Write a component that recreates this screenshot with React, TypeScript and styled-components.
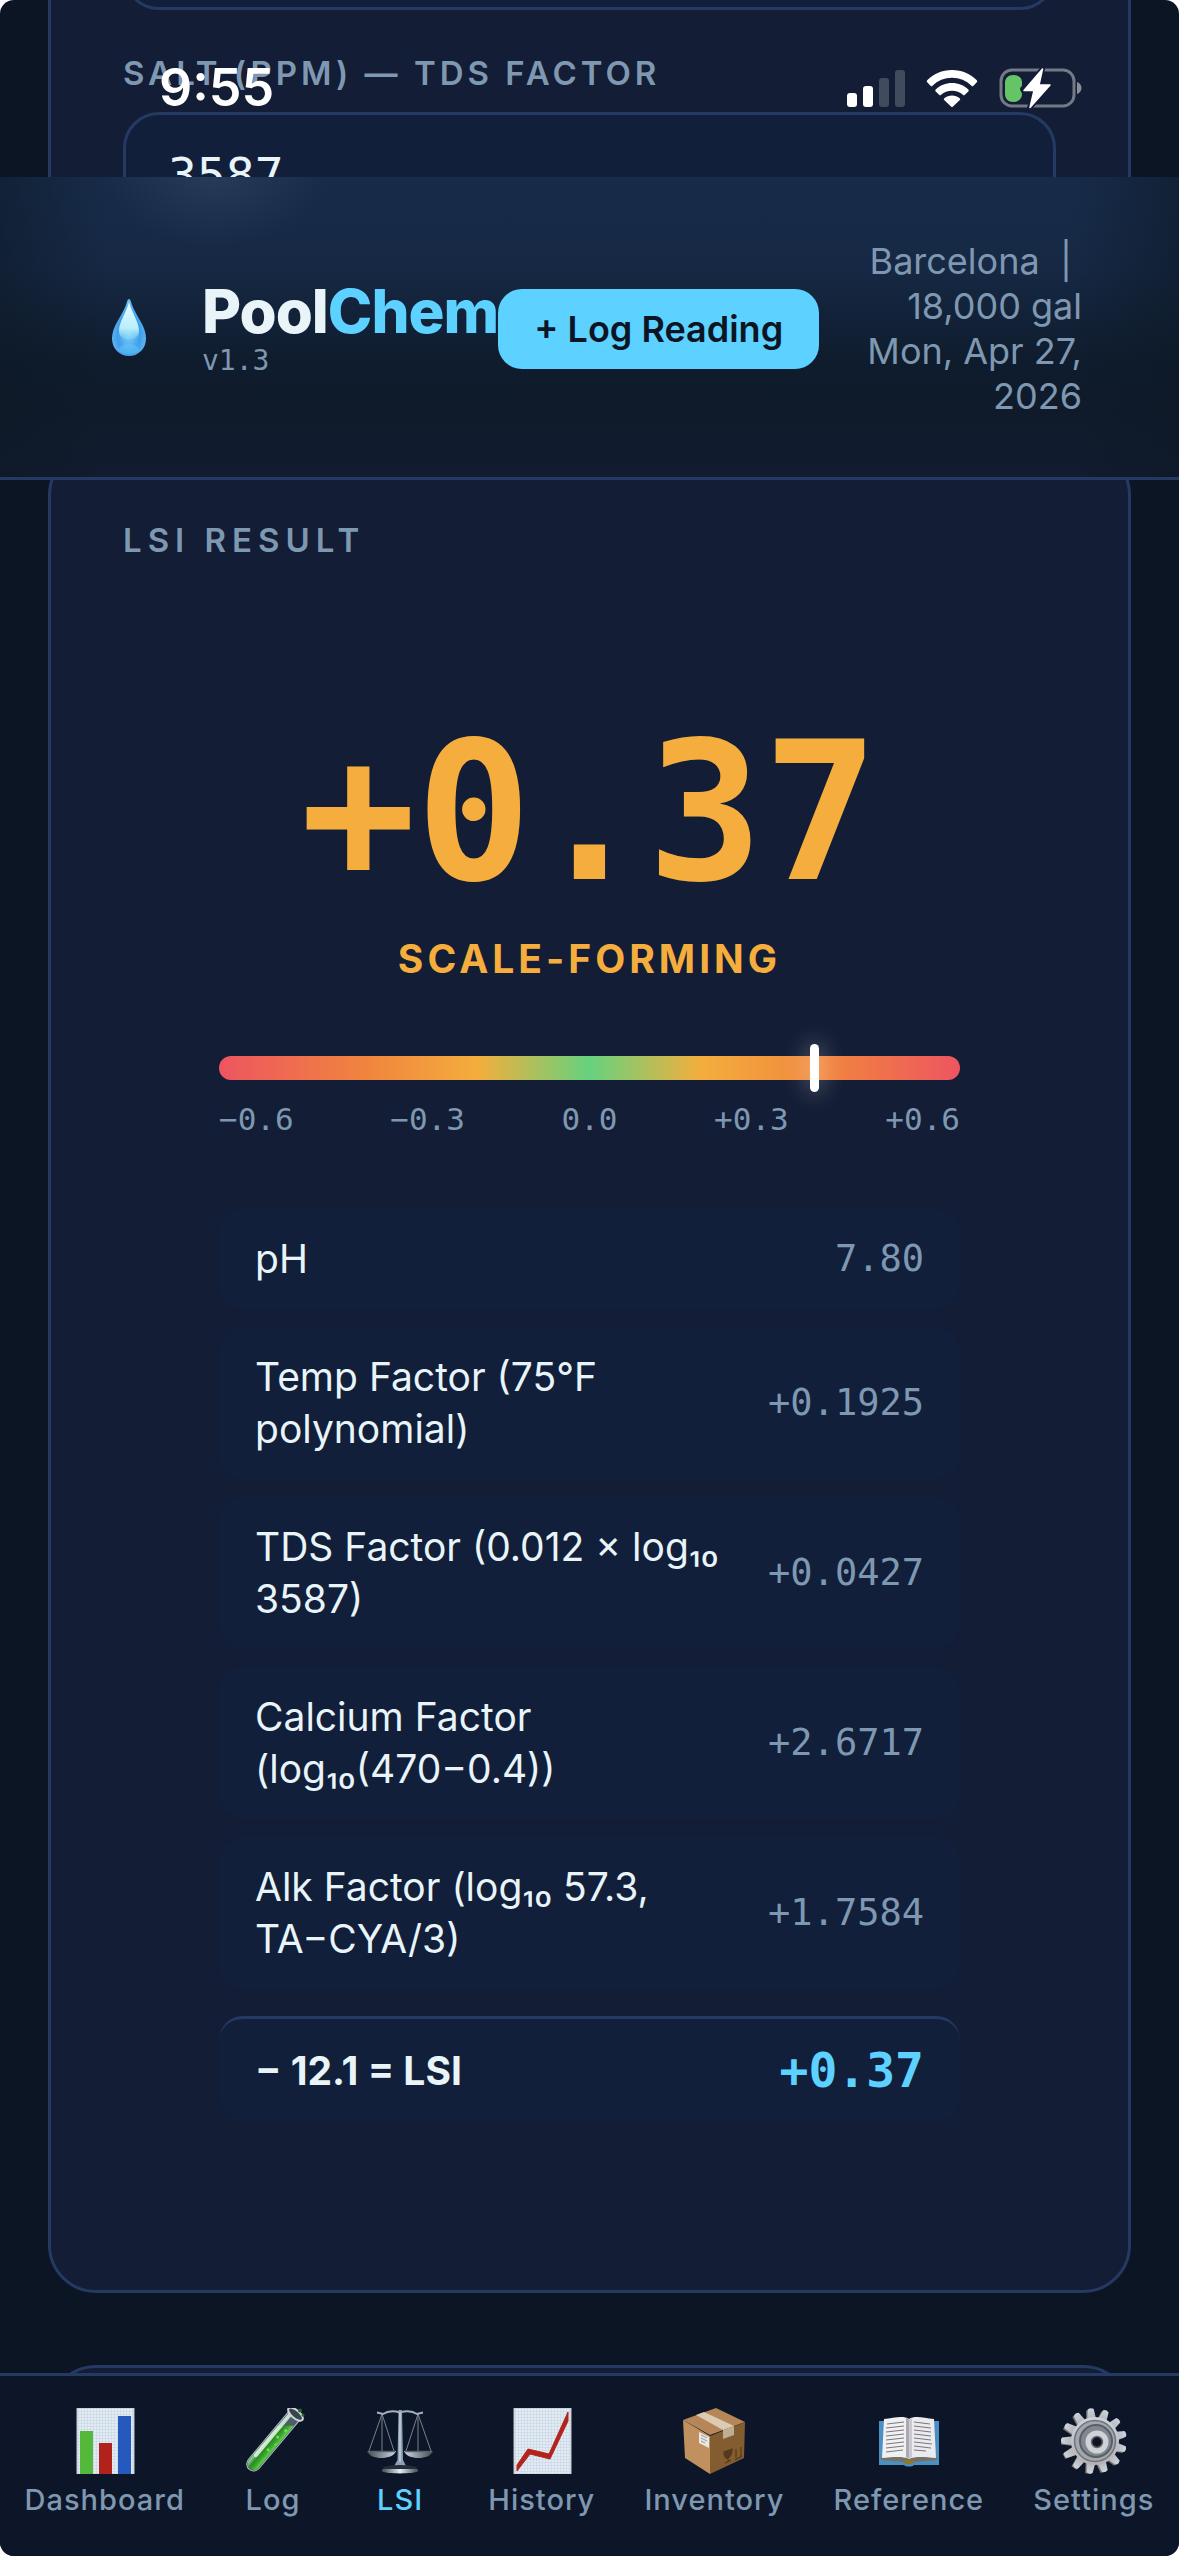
import React from "react";
import styled, { createGlobalStyle, css } from "styled-components";

const c = {
  page: "#0c1524",
  card: "#131d35",
  inset: "#111f3a",
  line: "#243a63",
  text: "#e8f4f8",
  muted: "#7f98b2",
  cyan: "#5dd1ff",
  amber: "#f5ae3e",
};
const sans = `Inter, "Liberation Sans", sans-serif`;
const mono = `"DejaVu Sans Mono", "Liberation Mono", monospace`;

const GlobalStyle = createGlobalStyle`
  *, *::before, *::after { box-sizing: border-box; }
  body { margin: 0; background: #fff; font-family: ${sans}; color: ${c.text}; }
`;

const Screen = styled.div`
  position: relative;
  height: 100vh;
  overflow: hidden;
  border-radius: 14px;
  background: ${c.page};
`;

/* ---------- status bar ---------- */
const StatusBar = styled.div`
  position: absolute;
  inset: 0 0 auto 0;
  z-index: 3;
  display: flex;
  align-items: center;
  justify-content: space-between;
  padding: 58px 96px 0 159px;
  color: #fff;
`;
const Clock = styled.time`
  font-size: 52px;
  line-height: 60px;
  font-weight: 600;
`;
const StatusIcons = styled.div`
  display: flex;
  align-items: center;
  gap: 21px;
  svg { display: block; }
`;

/* ---------- header ---------- */
const Header = styled.header`
  position: absolute;
  inset: 177px 0 auto 0;
  z-index: 2;
  display: flex;
  align-items: center;
  padding: 62px 97px 58px;
  border-bottom: 3px solid ${c.line};
  background:
    radial-gradient(ellipse 110px 70px at 215px 0, rgba(70, 92, 120, 0.32), transparent),
    linear-gradient(90deg, rgba(12, 24, 36, 0.5), transparent 9%, transparent 91%, rgba(12, 24, 36, 0.5)),
    linear-gradient(180deg, #172c4a 0%, #162844 30%, #0f1c2d 62%, #0f1b2b 78%, #121b30 100%);
`;
const Brand = styled.div`
  display: flex;
  flex: none;
  align-items: center;
  gap: 39px;
  svg { display: block; }
`;
const Title = styled.h1`
  margin: 0;
  font-size: 60px;
  line-height: 64px;
  font-weight: 800;
  letter-spacing: -1px;
`;
const Accent = styled.span`
  color: ${c.cyan};
`;
const Version = styled.div`
  font: 28px/36px ${mono};
  color: ${c.muted};
`;
const LogButton = styled.button`
  flex: none;
  height: 80px;
  padding: 0 36px;
  border: 0;
  border-radius: 24px;
  background: ${c.cyan};
  color: ${c.page};
  font: 600 36px/42px ${sans};
`;
const Meta = styled.div`
  flex: 1;
  padding-left: 30px;
  text-align: right;
  font-size: 36px;
  line-height: 45px;
  color: ${c.muted};
`;

/* ---------- content ---------- */
const Main = styled.main`
  display: flex;
  flex-direction: column;
  gap: 72px;
  padding: 0 48px;
`;
const Card = styled.section<{ $scrolled?: boolean }>`
  flex: none;
  min-height: 300px;
  padding: 72px;
  border: 3px solid ${c.line};
  border-radius: 48px;
  background: ${c.card};
  ${(p) =>
    p.$scrolled &&
    css`
      min-height: 0;
      margin-top: -116px;
      padding: 0 72px 134px;
      border-top: 0;
      border-radius: 0 0 48px 48px;
    `}
`;
const Fields = styled.div`
  display: flex;
  flex-direction: column;
  gap: 42px;
`;
const FieldBox = styled.div`
  display: flex;
  flex-direction: column;
  gap: 18px;
`;
const FieldLabel = styled.label`
  font-size: 33px;
  line-height: 42px;
  font-weight: 600;
  letter-spacing: 4px;
  text-transform: uppercase;
  color: ${c.muted};
`;
const NumberInput = styled.input`
  width: 100%;
  height: 126px;
  padding: 0 42px;
  border: 3px solid ${c.line};
  border-radius: 36px;
  background: ${c.inset};
  color: ${c.text};
  font: 48px/60px ${mono};
`;
const CardTitle = styled.h2`
  margin: 0 0 63px;
  font-size: 33px;
  line-height: 36px;
  font-weight: 600;
  letter-spacing: 6px;
  text-transform: uppercase;
  color: ${c.muted};
`;
const Result = styled.div`
  display: flex;
  flex-direction: column;
  padding: 96px;
`;
const Score = styled.output`
  text-align: center;
  font: 700 192px/192px ${mono};
  color: ${c.amber};
`;
const Verdict = styled.div`
  margin: 24px 0 72px;
  text-align: center;
  font-size: 39px;
  line-height: 51px;
  font-weight: 700;
  letter-spacing: 4px;
  color: ${c.amber};
`;
const Gauge = styled.div`
  position: relative;
  height: 24px;
  border-radius: 12px;
  background: linear-gradient(90deg, #ee5560 0%, #f0853e 20%, #f3ae3d 35%, #66d27e 50%, #f3ae3d 65%, #f0853e 82%, #ee5560 100%);
`;
const Needle = styled.div`
  position: absolute;
  top: -12px;
  width: 9px;
  height: 48px;
  margin-left: -5px;
  border-radius: 5px;
  background: #fff;
  box-shadow: 0 0 24px rgba(255, 255, 255, 0.55);
`;
const Ticks = styled.div`
  display: flex;
  justify-content: space-between;
  margin: 21px 0 72px;
  font: 31px/36px ${mono};
  color: ${c.muted};
`;
const Breakdown = styled.dl`
  display: flex;
  flex-direction: column;
  gap: 18px;
  margin: 0;
`;
const Row = styled.div<{ $total?: boolean }>`
  display: flex;
  align-items: center;
  justify-content: space-between;
  gap: 36px;
  padding: 24px 36px;
  border-radius: 24px;
  background: ${c.inset};
  font-size: 39px;
  line-height: 52px;
  ${(p) =>
    p.$total &&
    css`
      margin-top: 9px;
      border-top: 3px solid ${c.line};
      line-height: 55px;
      font-weight: 700;
    `}
`;
const Term = styled.dt``;
const Amount = styled.dd<{ $total?: boolean }>`
  flex: none;
  margin: 0;
  font-family: ${mono};
  font-size: ${(p) => (p.$total ? 48 : 37)}px;
  font-weight: ${(p) => (p.$total ? 700 : 400)};
  color: ${(p) => (p.$total ? c.cyan : c.muted)};
`;

/* ---------- bottom navigation ---------- */
const TabBar = styled.nav`
  position: absolute;
  inset: auto 0 0 0;
  z-index: 2;
  display: flex;
  justify-content: space-around;
  padding: 32px 0 38px;
  border-top: 3px solid ${c.line};
  background: #0d1628;
`;
const Tab = styled.a<{ $active?: boolean }>`
  display: flex;
  flex-direction: column;
  align-items: center;
  gap: 8px;
  min-width: 78px;
  font-size: 29px;
  line-height: 36px;
  font-weight: 500;
  letter-spacing: 1px;
  text-decoration: none;
  color: ${(p) => (p.$active ? c.cyan : c.muted)};
  svg { display: block; }
`;

/* ---------- drawings ---------- */
const Signal = () => (
  <svg width="58" height="38" viewBox="0 0 58 38" fill="#fff">
    <rect x="0" y="24" width="10" height="14" rx="3" />
    <rect x="16" y="17" width="10" height="21" rx="3" />
    <rect x="32" y="9" width="10" height="29" rx="3" opacity=".2" />
    <rect x="48" y="1" width="10" height="37" rx="3" opacity=".2" />
  </svg>
);
const Wifi = () => (
  <svg width="52" height="38" viewBox="0 0 52 38" fill="#fff">
    <path d="M26 1C16 1 7.500 5 1.200 11.200a1.400 1.400 0 0 0 0 2l3.300 3.500a1.400 1.400 0 0 0 2 0C11.700 11.700 18.500 8.800 26 8.800s14.300 2.900 19.500 7.900a1.400 1.400 0 0 0 2 0l3.300-3.500a1.400 1.400 0 0 0 0-2C44.500 5 36 1 26 1Z" />
    <path d="M26 14c-6.300 0-12 2.400-16.300 6.400a1.400 1.400 0 0 0 0 2l3.400 3.400a1.400 1.400 0 0 0 2 0c3-2.600 6.700-4.100 10.900-4.100s7.900 1.500 10.900 4.100a1.400 1.400 0 0 0 2 0l3.400-3.400a1.400 1.400 0 0 0 0-2C38 16.400 32.300 14 26 14Z" />
    <path d="M26 26.500c-2.900 0-5.500 1-7.600 2.700a1.300 1.300 0 0 0 0 2l6.600 6.400a1.400 1.400 0 0 0 2 0l6.600-6.400a1.300 1.300 0 0 0 0-2c-2.100-1.700-4.700-2.700-7.600-2.700Z" />
  </svg>
);
const Battery = () => (
  <svg width="84" height="42" viewBox="0 0 84 42">
    <rect x="2" y="3" width="73" height="36" rx="11" fill="none" stroke="#737985" strokeWidth="3" />
    <path d="M78 15c3 1 4.500 3.500 4.500 6S81 26 78 27Z" fill="#8a8f9b" />
    <path d="M14.500 8C20 8 23 11.500 23 15v3c0 2-2 2-2 4s2 3 2 5c0 4-3 8-8.500 8S6 31.500 6 27V16c0-4.500 3-8 8.500-8Z" fill="#65c466" />
    <path d="M43.500 2 25 23.500h10L30.500 41 51 18H40Z" fill="#fff" stroke="#131d35" strokeWidth="5" strokeLinejoin="round" />
    <path d="M43.500 2 25 23.500h10L31 40.500 51 18H40Z" fill="#fff" stroke="#fff" strokeWidth="1.500" strokeLinejoin="round" />
  </svg>
);
const Drop = () => (
  <svg width="66" height="66" viewBox="0 0 66 66">
    <defs>
      <radialGradient id="dropBody" cx="50%" cy="62%" r="55%">
        <stop offset="0" stopColor="#7fd0f8" />
        <stop offset=".6" stopColor="#3f9eea" />
        <stop offset="1" stopColor="#69b9f2" />
      </radialGradient>
      <linearGradient id="dropShine" x1="0" y1="0" x2="0" y2="1">
        <stop offset="0" stopColor="#e6fbff" />
        <stop offset=".7" stopColor="#b9effb" />
        <stop offset="1" stopColor="#8fdcf9" stopOpacity=".3" />
      </linearGradient>
    </defs>
    <path d="M32 3c1.500 0 2 3 3 6 4 11 14 21 14 33.500C49 52.500 41.500 60 32 60s-17-7.500-17-17.500C15 30 25 20 29 9c1-3 1.500-6 3-6Z" fill="url(#dropBody)" />
    <path d="M32 6c2 9 10 20 10 29 0 5-4 8.500-10 8.500S22 40 22 35c0-9 8-20 10-29Z" fill="url(#dropShine)" />
    <ellipse cx="32" cy="53" rx="10" ry="5" fill="#64c8fb" opacity=".5" />
  </svg>
);

const Paper = ({ id }: { id: string }) => (
  <>
    <defs>
      <pattern id={id} width="3" height="3" patternUnits="userSpaceOnUse">
        <rect width="3" height="3" fill="#e4ebf2" />
        <path d="M0 0H3M0 0V3" stroke="#bfd2e4" strokeWidth="1" />
      </pattern>
    </defs>
    <rect x="5" y="0" width="57" height="66" fill={`url(#${id})`} stroke="#c4c8cc" strokeWidth="1" />
  </>
);
const Bars = () => (
  <svg width="66" height="66" viewBox="0 0 66 66">
    <Paper id="gridBars" />
    <rect x="8" y="23" width="13" height="43" fill="#54b93b" />
    <rect x="27" y="35" width="13" height="31" fill="#b0221b" />
    <rect x="46" y="8" width="13" height="58" fill="#2559bd" />
  </svg>
);
const Trend = () => (
  <svg width="66" height="66" viewBox="0 0 66 66">
    <Paper id="gridTrend" />
    <path d="M8 57 19 41 40 46 59 4V13L41 51 21 46 8 63Z" fill="#b3231c" stroke="#b3231c" />
  </svg>
);
const Tube = () => (
  <svg width="66" height="66" viewBox="0 0 66 66">
    <defs>
      <linearGradient id="tubeFluid" x1="0" y1="0" x2="1" y2="0">
        <stop offset="0" stopColor="#8fdc9a" />
        <stop offset=".4" stopColor="#2c8a27" />
        <stop offset=".75" stopColor="#3fae2f" />
        <stop offset="1" stopColor="#62dc48" />
      </linearGradient>
    </defs>
    <g transform="rotate(40 33 33)">
      <path d="M26 -2h14v65a7 7 0 0 1-14 0Z" fill="#4d5f66" stroke="#aebabf" strokeWidth="1" />
      <path d="M27 18 39 8v55a6 6 0 0 1-12 0Z" fill="url(#tubeFluid)" />
      <rect x="27" y="0" width="4" height="57" rx="2" fill="#e1f3e5" opacity=".85" />
      <ellipse cx="33" cy="-2" rx="9" ry="4" fill="#39454d" stroke="#d0d4d7" strokeWidth="2" />
      <g fill="#6ee158">
        <circle cx="36" cy="17" r="1.500" />
        <circle cx="34" cy="27" r="1.500" />
        <circle cx="37" cy="34" r="1" />
        <circle cx="35" cy="43" r="1.500" />
      </g>
    </g>
    <circle cx="60" cy="2.500" r="2" fill="#28662f" />
    <circle cx="63" cy="7" r="1.500" fill="#28662f" />
  </svg>
);
const Scales = () => (
  <svg width="66" height="66" viewBox="0 0 66 66">
    <defs>
      <linearGradient id="steel" x1="0" y1="0" x2="1" y2="0">
        <stop offset="0" stopColor="#404953" />
        <stop offset=".5" stopColor="#e2edf6" />
        <stop offset="1" stopColor="#404953" />
      </linearGradient>
    </defs>
    <g fill="none" stroke="#77808a" strokeWidth="1">
      <path d="M15 6 2 43M15 6V43M15 6 27 43M51 6 39 43M51 6V43M51 6 64 43" />
    </g>
    <path d="M10 4.500 16 6C22 2 28 3 33 4.500 38 3 44 2 50 6l6-1.500" fill="none" stroke="#a5b0bb" strokeWidth="2" />
    <path d="M31.500 2h3.500l1 50 4 8H26l4.500-8Z" fill="#8fa0b3" />
    <path d="M33 4V54" stroke="#dce7f0" strokeWidth="1" />
    <path d="M0 43H29C27 48 21 50 14.500 50S2 48 0 43ZM37 43H66C64 48 58 50 51.500 50S39 48 37 43Z" fill="url(#steel)" />
    <path d="M1 43.500H28M38 43.500H65" stroke="#59636e" strokeWidth="1.500" />
    <ellipse cx="33" cy="60" rx="17" ry="3" fill="#242c36" />
    <path d="M15 61H51V63.500C45 66 21 66 15 63.500Z" fill="url(#steel)" />
  </svg>
);
const Parcel = () => (
  <svg width="66" height="66" viewBox="0 0 66 66">
    <path d="M2 12 35 0 64 14 29 27Z" fill="#b58758" />
    <path d="M2 12 29 28V66L4 50Z" fill="#c0905f" />
    <path d="M29 28 64 14 63 50 29 66Z" fill="#835c30" />
    <path d="M15 7 23 4 53 18 42 22Z" fill="#dccbb2" />
    <path d="M42 22 53 18V27L42 31Z" fill="#bfae92" />
    <path d="M18 24 28 29V40L18 35Z" fill="#e8e8e6" />
    <path d="M20 27 26 30M20 30 26 33M20 33 24 35" stroke="#97999b" strokeWidth="1" />
    <path d="M43 44 51 41C51 47 49 49 47 50S43 49 43 44ZM47 50V54M44 55 50 52M55 41V50M60 39V48M54 52 61 48" fill="#54391b" stroke="#54391b" strokeWidth="1.200" />
  </svg>
);
const Book = () => (
  <svg width="66" height="66" viewBox="0 0 66 66">
    <path d="M3 13H63V57H38C36 59 30 59 28 57H3Z" fill="#4a90c2" />
    <path d="M5 52 28 54C31 56 35 56 38 54L61 52V49H5Z" fill="#777267" />
    <path d="M8 11C18 10 27 7 33 11V51C27 48 17 49 6 50Z" fill="#f0f0f2" />
    <path d="M58 11C48 10 39 7 33 11V51C39 48 49 49 60 50Z" fill="#ebebef" />
    <path d="M30 9.500C32 10 32.500 11 33 12V51L30 49Z" fill="#aaaab0" />
    <path d="M33 12 36 9.500V49L33 51Z" fill="#c9c9cf" />
    <g stroke="#77777c" strokeWidth="1" fill="none">
      <path d="M11 16 28 14M10 20 28 18M10 24 28 22M10 28 28 26M10 32 28 30M10 36 28 34M10 40 28 38M10 44 27 42" />
      <path d="M38 14 54 16M38 18 55 20M38 22 55 24M38 26 55 28M38 30 55 32M38 34 56 36M38 38 55 40M38 42 50 43" />
    </g>
    <ellipse cx="33" cy="54" rx="5" ry="2" fill="#8f7b28" />
  </svg>
);
const Gear = () => (
  <svg width="66" height="66" viewBox="0 0 66 66">
    <defs>
      <linearGradient id="gearBody" x1="0" y1="0" x2="0" y2="1">
        <stop offset="0" stopColor="#cbd6df" />
        <stop offset="1" stopColor="#b5b0b4" />
      </linearGradient>
    </defs>
    <g fill="#7b7672" transform="translate(-1.500 1)">
      {Array.from({ length: 13 }, (_, i) => (
        <path key={i} d="M29 12 30 1h6l1 11Z" transform={`rotate(${i * (360 / 13) - 6} 33 33)`} />
      ))}
    </g>
    <g fill="url(#gearBody)">
      {Array.from({ length: 13 }, (_, i) => (
        <path key={i} d="M28.500 12 30 1q3-2 6 0l1.500 11Z" transform={`rotate(${i * (360 / 13) - 6} 33 33)`} />
      ))}
      <circle cx="34" cy="33" r="24" />
    </g>
    <circle cx="34" cy="33" r="20.500" fill="#a1a8ae" stroke="#6d747a" strokeWidth="1.500" />
    <circle cx="35" cy="33" r="16" fill="#82888d" stroke="#5a6066" strokeWidth="2" />
    <circle cx="36" cy="34" r="8.500" fill="none" stroke="#cdd3d9" strokeWidth="6" />
    <circle cx="36" cy="34" r="5.500" fill="#0d1628" stroke="#6e6a68" strokeWidth="1.500" />
  </svg>
);

/* ---------- data ---------- */
const factors = [
  ["pH", "7.80"],
  ["Temp Factor (75°F polynomial)", "+0.1925"],
  ["TDS Factor (0.012 × log₁₀ 3587)", "+0.0427"],
  ["Calcium Factor (log₁₀(470−0.4))", "+2.6717"],
  ["Alk Factor (log₁₀ 57.3, TA−CYA/3)", "+1.7584"],
];
const tabs = [
  { name: "Dashboard", Icon: Bars },
  { name: "Log", Icon: Tube },
  { name: "LSI", Icon: Scales },
  { name: "History", Icon: Trend },
  { name: "Inventory", Icon: Parcel },
  { name: "Reference", Icon: Book },
  { name: "Settings", Icon: Gear },
];
const lsi = 0.365;

export default function App() {
  return (
    <Screen>
      <GlobalStyle />
      <StatusBar>
        <Clock>9:55</Clock>
        <StatusIcons>
          <Signal />
          <Wifi />
          <Battery />
        </StatusIcons>
      </StatusBar>

      <Header>
        <Brand>
          <Drop />
          <div>
            <Title>
              Pool<Accent>Chem</Accent>
            </Title>
            <Version>v1.3</Version>
          </div>
        </Brand>
        <LogButton type="button">+ Log Reading</LogButton>
        <Meta>
          <div>{"Barcelona\u00a0 |\u00a0 18,000 gal"}</div>
          <div>Mon, Apr 27, 2026</div>
        </Meta>
      </Header>

      <Main>
        <Card $scrolled>
          <Fields>
            <NumberInput aria-label="CYA" />
            <FieldBox>
              <FieldLabel htmlFor="salt">Salt (ppm) — TDS Factor</FieldLabel>
              <NumberInput id="salt" inputMode="numeric" defaultValue="3587" />
            </FieldBox>
          </Fields>
        </Card>

        <Card>
          <CardTitle>LSI Result</CardTitle>
          <Result>
            <Score>+0.37</Score>
            <Verdict>SCALE-FORMING</Verdict>
            <Gauge>
              <Needle style={{ left: `${((lsi + 0.6) / 1.2) * 100}%` }} />
            </Gauge>
            <Ticks>
              {["−0.6", "−0.3", "0.0", "+0.3", "+0.6"].map((t) => (
                <span key={t}>{t}</span>
              ))}
            </Ticks>
            <Breakdown>
              {factors.map(([name, value]) => (
                <Row key={name}>
                  <Term>{name}</Term>
                  <Amount>{value}</Amount>
                </Row>
              ))}
              <Row $total>
                <Term>− 12.1 = LSI</Term>
                <Amount $total>+0.37</Amount>
              </Row>
            </Breakdown>
          </Result>
        </Card>

        <Card />
      </Main>

      <TabBar>
        {tabs.map(({ name, Icon }) => (
          <Tab key={name} href={`#${name.toLowerCase()}`} $active={name === "LSI"}>
            <Icon />
            {name}
          </Tab>
        ))}
      </TabBar>
    </Screen>
  );
}
